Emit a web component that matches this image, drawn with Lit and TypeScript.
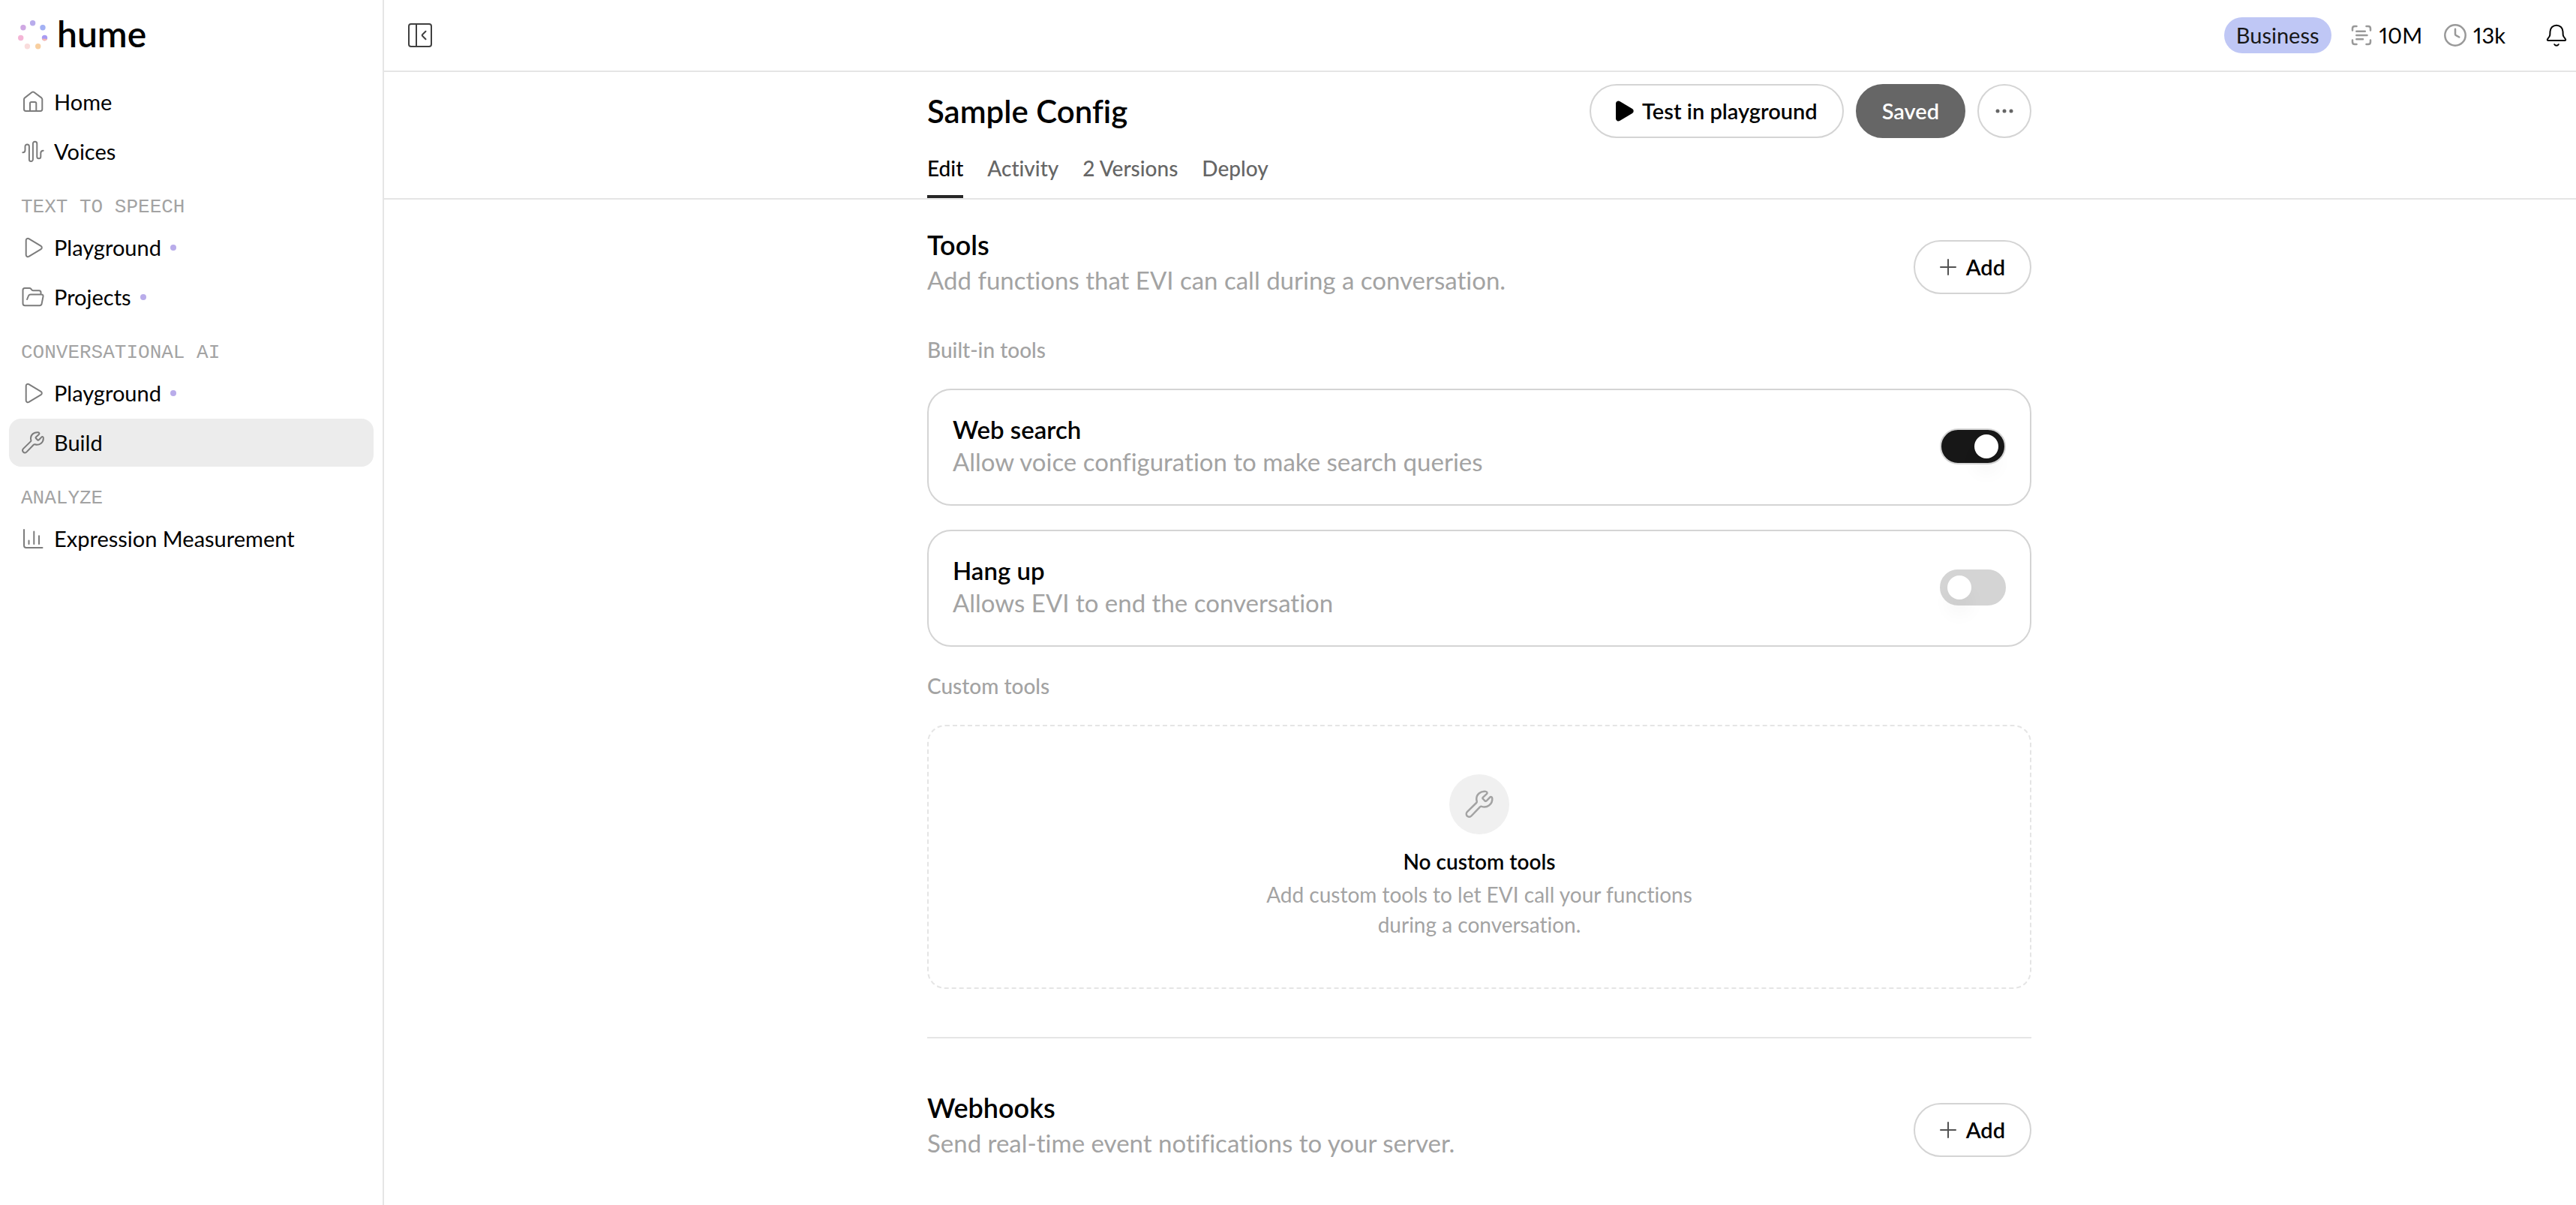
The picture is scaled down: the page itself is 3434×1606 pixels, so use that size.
import { LitElement, html, css, svg, nothing } from "lit";
import { customElement, property, state } from "lit/decorators.js";
import { classMap } from "lit/directives/class-map.js";

const glyphs: Record<string, unknown> = {
  home: svg`<path d="M4 12.600c0-.9.3-1.700 1-2.200L14.500 3c.9-.7 2.100-.7 3 0l9.800 7.400c.6.500 1 1.300 1 2.200v12.900c0 1.400-1 2.400-2.300 2.400H6.300C5 27.900 4 26.900 4 25.500Z"/><path d="M12 27.900V17.800c0-1 .7-1.700 1.700-1.700h4.900c1 0 1.700.7 1.700 1.700v10.100"/>`,
  voices: svg`<path d="M2.300 17.300c2 0 3.200-1.200 3.200-3.200V9.200a2.700 2.700 0 0 1 5.400 0v17.400a2.500 2.500 0 0 0 5 0V5.400a2.700 2.700 0 0 1 5.400 0v17.400a2.500 2.500 0 0 0 5 0V18c0-2 1.200-3.200 3.400-3.300"/>`,
  play: svg`<path d="M6.700 6.300c0-1.900 2-3.100 3.700-2.200l16.200 9.800c1.600 1 1.600 3.300 0 4.200l-16.200 9.800c-1.700.9-3.700-.3-3.700-2.200Z"/>`,
  folder: svg`<path d="M26.500 12.300V9.800c0-1.500-1-2.500-2.500-2.500h-7.600c-.8 0-1.500-.3-2-.9l-1.200-1.500c-.5-.6-1.200-.9-2-.9H5C3.500 4 2.500 5 2.500 6.500v18c0 1.500 1 2.700 2.700 2.700h19.600c1.500 0 2.600-.9 2.800-2.300l1.900-9.700c.3-1.600-.7-2.800-2.300-2.800H13c-1.600 0-2.600.7-3.100 2.100L8.100 19"/>`,
  wrench: svg`<path d="M23.900 4.900C24.900 3.900 24.300 2.500 22.900 2.300C17.500 1.600 12.900 5.300 13 10.200C13 11.200 13.200 12.100 13.400 12.900C13.500 13.500 13.300 14 12.900 14.400L3.200 23.900C1.900 25.200 1.900 27.200 3.100 28.500C4.300 29.700 6.300 29.700 7.500 28.400L16.800 18.700C17.300 18.300 17.900 18.100 18.500 18.300C24.500 20.300 30.300 15.600 29.800 9.600C29.700 8 28.300 7.600 27.300 8.600L23.800 12.200C23.300 12.700 22.600 12.700 22 12.300L20 10.200C19.500 9.700 19.500 9 20 8.500Z"/>`,
  chart: svg`<path d="M4 4v21c0 1.900 1 3 3 3h21.500M10.500 18.500V23M17.300 6.500V23M24 12.300V23"/>`,
  panel: svg`<rect x="1" y="1" width="30" height="30" rx="3"/><path d="M11 1v30M23.500 10.700 19 15.300c-.4.400-.4 1 0 1.400l4.500 4.600"/>`,
  scan: svg`<path d="M4 9.500V7c0-1.700 1.300-3 3-3h2.500M22.500 4H25c1.700 0 3 1.300 3 3v2.500M28 22.500V25c0 1.700-1.300 3-3 3h-2.500M9.500 28H7c-1.700 0-3-1.300-3-3v-2.500M9.300 10.700h11.500M9.300 16h14.200M9.300 21.300h8.700"/>`,
  clock: svg`<circle cx="16" cy="16" r="13.700"/><path d="M16 7.700v7c0 .7.400 1.200 1 1.500l4.300 2.300"/>`,
  bell: svg`<path d="M16 2.700c-4.700 0-8.300 3.600-8.500 8.300l-.2 4.300c0 .8-.3 1.500-.7 2.200l-2.600 3.700c-.6 1 0 1.900 1.100 1.900h21.800c1.100 0 1.700-.9 1.100-1.900l-2.600-3.700c-.4-.7-.7-1.400-.7-2.200l-.2-4.300c-.2-4.700-3.800-8.300-8.500-8.300ZM13.300 28.200c.6.900 1.600 1.500 2.700 1.500s2.100-.6 2.700-1.500"/>`,
  solidPlay: svg`<path fill="currentColor" d="M6 6c0-1.900 2-3.100 3.700-2.200l16.800 10.100c1.600 1 1.600 3.300 0 4.200L9.700 28.200C8 29.100 6 27.900 6 26Z"/>`,
  plus: svg`<path d="M16 6v20M6 16h20"/>`,
  more: svg`<g fill="currentColor" stroke="none"><circle cx="7" cy="16" r="2.500"/><circle cx="16" cy="16" r="2.500"/><circle cx="25" cy="16" r="2.500"/></g>`,
};

@customElement("ui-icon")
class UiIcon extends LitElement {
  @property() name = "";
  static styles = css`
    :host { display: inline-flex; flex: none; width: 32px; height: 32px; }
    .glyph {
      width: 100%; height: 100%; fill: none; stroke: currentColor;
      stroke-width: var(--icon-stroke, 2px); stroke-linecap: round; stroke-linejoin: round;
    }
  `;
  render() {
    return html`<svg class="glyph" viewBox="0 0 32 32" aria-hidden="true">${glyphs[this.name]}</svg>`;
  }
}

const base = css`
  * { box-sizing: border-box; margin: 0; }
  button, input { font: inherit; color: inherit; font-variant-ligatures: none; }
  a { color: inherit; text-decoration: none; }
`;

interface NavItem { label: string; icon: string; dot?: boolean; active?: boolean }
interface NavGroup { heading?: string; items: NavItem[] }

const navigation: NavGroup[] = [
  { items: [{ label: "Home", icon: "home" }, { label: "Voices", icon: "voices" }] },
  {
    heading: "TEXT TO SPEECH",
    items: [{ label: "Playground", icon: "play", dot: true }, { label: "Projects", icon: "folder", dot: true }],
  },
  {
    heading: "CONVERSATIONAL AI",
    items: [{ label: "Playground", icon: "play", dot: true }, { label: "Build", icon: "wrench", active: true }],
  },
  { heading: "ANALYZE", items: [{ label: "Expression Measurement", icon: "chart" }] },
];

@customElement("side-nav")
class SideNav extends LitElement {
  static styles = [base, css`
    :host { display: block; border-right: 2px solid #e5e5e5; }
    .brand { display: flex; align-items: center; gap: 12px; height: 94px; padding: 0 24px; }
    .mark { width: 40px; height: 40px; }
    .word { padding-bottom: 4px; font-size: 48px; line-height: 48px; font-weight: 600; }
    .nav { padding: 10px 12px 0; }
    .list { display: flex; flex-direction: column; gap: 2px; list-style: none; padding: 0; }
    .heading {
      height: 64px; padding: 26px 16px 0; font: 400 26px/32px "Liberation Mono", monospace; color: #a3a3a3;
    }
    .item {
      display: flex; align-items: center; gap: 12px; height: 64px; padding: 0 16px;
      border-radius: 16px; font-size: 29px; line-height: 40px;
    }
    .item.active { background: #ececec; }
    .icon { color: #7c7c7c; }
    .dot { width: 8px; height: 8px; border-radius: 50%; background: #b9acea; }
  `];
  render() {
    return html`
      <a class="brand" href="#">
        <svg class="mark" viewBox="0 0 40 40" aria-hidden="true">
          <circle cx="19.600" cy="3.800" r="3.700" fill="#b8acec"/>
          <circle cx="33" cy="9.800" r="3.700" fill="#a3b1f4"/>
          <circle cx="35.500" cy="23.500" r="3.700" fill="#a99bf2"/>
          <path d="M31.900 24.500 39 25a3.700 3.700 0 0 1-7.100-.5Z" fill="#f8b8ae"/>
          <circle cx="26.700" cy="34.800" r="3.700" fill="#f8cfa0"/>
          <circle cx="12.400" cy="34.800" r="3.700" fill="#f9dcdc"/>
          <circle cx="3.700" cy="23.500" r="3.700" fill="#f4b5d6"/>
          <circle cx="6.900" cy="9.800" r="3.700" fill="#cfa8e3"/>
        </svg>
        <span class="word">hume</span>
      </a>
      <nav class="nav" aria-label="Main">
        ${navigation.map((group) => html`
          ${group.heading ? html`<h2 class="heading">${group.heading}</h2>` : nothing}
          <ul class="list">
            ${group.items.map((item) => html`
              <li>
                <a class=${classMap({ item: true, active: !!item.active })} href="#">
                  <ui-icon class="icon" name=${item.icon}></ui-icon>
                  <span>${item.label}</span>
                  ${item.dot ? html`<span class="dot"></span>` : nothing}
                </a>
              </li>`)}
          </ul>`)}
      </nav>`;
  }
}

@customElement("top-bar")
class TopBar extends LitElement {
  static styles = [base, css`
    :host {
      display: flex; align-items: center; justify-content: space-between; height: 96px;
      padding: 0 10px 0 32px; border-bottom: 2px solid #e5e5e5; font-size: 29px; line-height: 40px;
    }
    .tool { display: flex; padding: 0; border: 0; background: none; color: #404040; }
    .status { display: flex; align-items: center; gap: 28px; }
    .lead { display: flex; align-items: center; gap: 24px; }
    .plan { padding: 4px 16px; border-radius: 24px; background: #bfc7f5; color: #171717; }
    .usage { display: flex; align-items: center; gap: 8px; font-variant-numeric: proportional-nums; }
    .muted { color: #999; --icon-stroke: 2.500px; }
    .bell { margin-left: 24px; color: #000; }
  `];
  render() {
    return html`
      <button class="tool" aria-label="Collapse sidebar"><ui-icon name="panel"></ui-icon></button>
      <div class="status">
        <div class="lead">
          <span class="plan">Business</span>
          <span class="usage"><ui-icon class="muted" name="scan"></ui-icon>10M</span>
        </div>
        <span class="usage"><ui-icon class="muted" name="clock"></ui-icon>13k</span>
        <button class="tool bell" aria-label="Notifications"><ui-icon name="bell"></ui-icon></button>
      </div>`;
  }
}

interface Tool { id: string; name: string; about: string; on: boolean }

@customElement("app-root")
class AppRoot extends LitElement {
  @state() private tools: Tool[] = [
    { id: "web-search", name: "Web search", about: "Allow voice configuration to make search queries", on: true },
    { id: "hang-up", name: "Hang up", about: "Allows EVI to end the conversation", on: false },
  ];
  private tabs = ["Edit", "Activity", "2 Versions", "Deploy"];

  static styles = [base, css`
    :host {
      display: grid; grid-template-columns: 512px minmax(0, 1fr); min-height: 100vh; background: #fff;
      color: #000; font-family: Lato, "Liberation Sans", sans-serif; font-size: 28px; line-height: 40px;
      font-variant-ligatures: none;
    }
    .column { max-width: 1472px; margin: 0 auto; }
    .page { padding-right: 2px; }
    .header { padding-top: 16px; border-bottom: 2px solid #e5e5e5; }
    .title-row { display: flex; align-items: center; justify-content: space-between; }
    .title { font-size: 42px; line-height: 48px; font-weight: 600; }
    .actions { display: flex; gap: 16px; }
    .button {
      display: flex; align-items: center; justify-content: center; gap: 8px; height: 72px; padding: 0 33px;
      border: 2px solid #d4d4d4; border-radius: 36px; background: #fff; font-size: 29px; font-weight: 600;
    }
    .button.with-icon { padding-left: 28px; }
    .button.solid { border-color: #666; background: #666; color: #fff; }
    .button.round { width: 72px; padding: 0; color: #666; }
    .plus { color: #525252; }
    .tabs { display: flex; gap: 32px; }
    .tab {
      padding: 16px 0; border-top: 4px solid transparent; border-bottom: 4px solid transparent;
      color: #666; font-weight: 500;
    }
    .tab.current { border-bottom-color: #262626; color: #000; }
    .section { display: flex; flex-direction: column; gap: 32px; padding-top: 36px; }
    .section + .section { margin-top: 64px; padding-top: 68px; border-top: 2px solid #e5e5e5; }
    .section-head { display: flex; align-items: center; justify-content: space-between; margin-bottom: 4px; }
    .section-text { padding-bottom: 12px; }
    .heading { font-size: 36px; line-height: 48px; font-weight: 600; }
    .about { font-size: 33px; line-height: 46px; color: #a3a3a3; }
    .section-head .about { padding-bottom: 2px; }
    .group { font-size: 28px; line-height: 40px; font-weight: 500; color: #a3a3a3; }
    .card {
      display: flex; align-items: center; justify-content: space-between; padding: 32px 32px 34px;
      border: 2px solid #d4d4d4; border-radius: 32px;
    }
    .card-name { display: block; font-size: 33px; line-height: 40px; font-weight: 600; }
    .card-about { font-size: 33px; line-height: 46px; color: #a3a3a3; }
    .switch {
      appearance: none; display: flex; align-items: center; width: 88px; height: 48px; padding: 0 8px;
      border: 2px solid #d4d4d4; border-radius: 24px; background: #d4d4d4;
    }
    .switch::before {
      content: ""; width: 32px; height: 32px; border-radius: 50%; background: #fff;
      box-shadow: 0 20px 24px rgba(0, 0, 0, 0.04);
    }
    .switch:checked { justify-content: flex-end; background: #171717; }
    .empty {
      display: flex; flex-direction: column; align-items: center; padding: 64px; text-align: center;
      border: 2px dashed #e5e5e5; border-radius: 24px;
    }
    .badge {
      display: flex; align-items: center; justify-content: center; width: 80px; height: 80px;
      margin-bottom: 16px; border-radius: 50%; background: #f0f0f0; color: #a3a3a3;
    }
    .badge-icon { width: 40px; height: 40px; }
    .empty-title { font-size: 28px; line-height: 40px; font-weight: 600; }
    .empty-text { max-width: 640px; margin-top: 4px; color: #a3a3a3; }
  `];

  private toggle(id: string) {
    this.tools = this.tools.map((tool) => (tool.id === id ? { ...tool, on: !tool.on } : tool));
  }

  private sectionHead(heading: string, about: string) {
    return html`
      <div class="section-head">
        <div class="section-text">
          <h2 class="heading">${heading}</h2>
          <p class="about">${about}</p>
        </div>
        <button class="button with-icon"><ui-icon class="plus" name="plus"></ui-icon>Add</button>
      </div>`;
  }

  render() {
    return html`
      <side-nav></side-nav>
      <div>
        <top-bar></top-bar>
        <div class="page header">
          <div class="column">
            <div class="title-row">
              <h1 class="title">Sample Config</h1>
              <div class="actions">
                <button class="button with-icon"><ui-icon name="solidPlay"></ui-icon>Test in playground</button>
                <button class="button solid">Saved</button>
                <button class="button round" aria-label="More actions"><ui-icon name="more"></ui-icon></button>
              </div>
            </div>
            <nav class="tabs" aria-label="Config">
              ${this.tabs.map((tab, i) => html`<a class=${classMap({ tab: true, current: i === 0 })} href="#">${tab}</a>`)}
            </nav>
          </div>
        </div>
        <main class="page">
          <div class="column">
            <section class="section">
              ${this.sectionHead("Tools", "Add functions that EVI can call during a conversation.")}
              <h3 class="group">Built-in tools</h3>
              ${this.tools.map((tool) => html`
                <div class="card">
                  <div>
                    <label class="card-name" for=${tool.id}>${tool.name}</label>
                    <p class="card-about">${tool.about}</p>
                  </div>
                  <input class="switch" type="checkbox" role="switch" id=${tool.id}
                    .checked=${tool.on} @change=${() => this.toggle(tool.id)} />
                </div>`)}
              <h3 class="group">Custom tools</h3>
              <div class="empty">
                <span class="badge"><ui-icon class="badge-icon" name="wrench"></ui-icon></span>
                <h4 class="empty-title">No custom tools</h4>
                <p class="empty-text">Add custom tools to let EVI call your functions during a conversation.</p>
              </div>
            </section>
            <section class="section">
              ${this.sectionHead("Webhooks", "Send real-time event notifications to your server.")}
            </section>
          </div>
        </main>
      </div>`;
  }
}
